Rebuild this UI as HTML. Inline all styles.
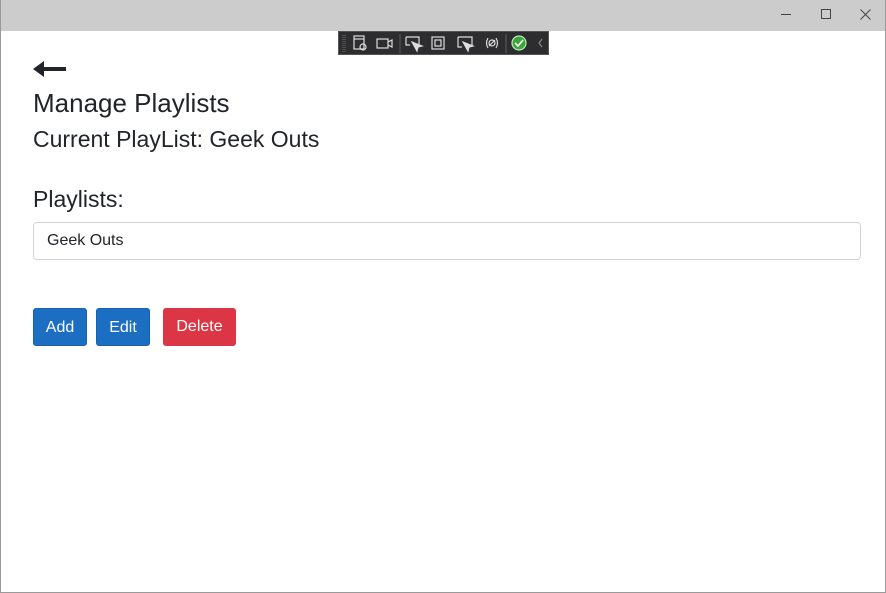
<!DOCTYPE html>
<html><head><meta charset="utf-8"><style>
*{box-sizing:border-box;margin:0;padding:0}
body{width:886px;height:593px;overflow:hidden;background:#fff;font-family:"Liberation Sans",Arial,sans-serif;color:#212529;position:relative}
.frame{position:absolute;inset:0;border:1px solid #9a9a9a;border-top:none}
.tb{position:absolute;left:0;top:0;width:886px;height:31px;background:#cccccc}
.tool{position:absolute;left:338px;top:31px;width:211px;height:24px;background:#2d2d30;border:1px solid #555}
.h1{position:absolute;left:33px;top:88px;font-size:26px}
.h2{position:absolute;left:33px;top:126px;font-size:23px}
.lbl{position:absolute;left:33px;top:186px;font-size:23px}
.inp{position:absolute;left:33px;top:222px;width:828px;height:38px;border:1px solid #ced4da;border-radius:4px;font-size:16px;padding:9px 13px}
.btn{position:absolute;top:308px;height:38px;border-radius:3px;color:#fff;font-size:16px;text-align:center;line-height:37px}
</style></head><body>
<div class="tb"></div>
<svg style="position:absolute;left:775px;top:5px" width="100" height="20" viewBox="775 5 100 20" fill="none" stroke="#444" stroke-width="1">
<line x1="781" y1="14.5" x2="791" y2="14.5"/>
<rect x="821.5" y="9.5" width="9" height="9"/>
<path d="M860.5 9.5l10 10M870.5 9.5l-10 10"/>
</svg>
<div class="frame"></div>
<div class="tool">
<svg width="211" height="22" viewBox="0 0 211 22" fill="none" stroke="#ddd" stroke-width="1.2">
<g stroke="#666" stroke-dasharray="1 1"><line x1="4" y1="3" x2="4" y2="20"/><line x1="6" y1="3" x2="6" y2="20"/></g>
<rect x="15" y="4" width="10" height="13"/><line x1="15" y1="7" x2="25" y2="7"/><circle cx="24" cy="15" r="3"/>
<rect x="38" y="7" width="11" height="9"/><path d="M49 10l4-2v7l-4-2"/>
<line x1="61" y1="2" x2="61" y2="21" stroke="#555"/>
<path d="M67 5h13v8M67 5v8h4"/><path d="M73 10l5 9 1-4 4-1z" fill="#ddd"/>
<rect x="93" y="5" width="12" height="12"/><rect x="96" y="8" width="6" height="6"/>
<path d="M119 5h14v10M119 5v10h4"/><path d="M124 10l5 9 1-4 4-1z" fill="#ddd"/>
<path d="M149 6q-3 5 0 10M157 6q3 5 0 10M150 14l6-6"/><circle cx="153" cy="11" r="3"/>
<line x1="167" y1="2" x2="167" y2="21" stroke="#555"/>
<circle cx="180" cy="11" r="7" fill="#3aa63a" stroke="#bfe3bf"/><path d="M176 11l3 3 5-6" stroke="#fff" stroke-width="1.6"/>
<path d="M203 7l-3 4 3 4" stroke="#888"/>
</svg></div>
<svg style="position:absolute;left:33px;top:60px" width="34" height="18" viewBox="0 0 34 18"><path d="M0 9L11 1v6h22v4H11v6z" fill="#212529"/></svg>
<div class="h1">Manage Playlists</div>
<div class="h2">Current PlayList: Geek Outs</div>
<div class="lbl">Playlists:</div>
<div class="inp">Geek Outs</div>
<div class="btn" style="left:33px;width:54px;background:#1b6ec2;border:1px solid #1861ac">Add</div>
<div class="btn" style="left:96px;width:54px;background:#1b6ec2;border:1px solid #1861ac">Edit</div>
<div class="btn" style="left:163px;width:73px;background:#dc3545">Delete</div>
</body></html>
